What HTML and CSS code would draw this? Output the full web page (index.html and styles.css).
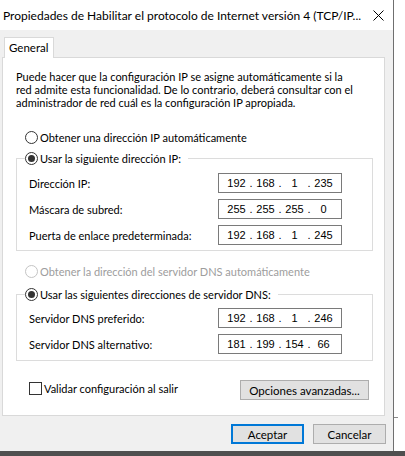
FILE: index.html
```html
<!DOCTYPE html>
<html lang="es">
<head>
<meta charset="utf-8">
<title>Propiedades TCP/IPv4</title>
<link rel="stylesheet" href="styles.css">
</head>
<body>
<div class="screen">
  <div class="top">
    <div class="window">
      <div class="titlebar">
        <span class="title">Propiedades de Habilitar el protocolo de Internet versión 4 (TCP/IP...</span>
        <svg class="close" width="11" height="11" viewBox="0 0 11 11"><path d="M0.5 0.5L10.5 10.5M10.5 0.5L0.5 10.5" stroke="#000" stroke-width="1" fill="none"/></svg>
      </div>
      <div class="client">
        <div class="tabs"><div class="tab">General</div></div>
        <div class="panel">
          <p class="desc">Puede hacer que la configuración IP se asigne automáticamente si la<br>red admite esta funcionalidad. De lo contrario, deberá consultar con el<br>administrador de red cuál es la configuración IP apropiada.</p>
          <div class="radio-row first"><span class="radio"></span><span>Obtener una dirección IP automáticamente</span></div>
          <div class="group g1">
            <div class="legend"><span class="radio checked"></span><span>Usar la siguiente dirección IP:</span></div>
            <div class="field"><span class="label">Dirección IP:</span><div class="ip"><span class="oct">192</span><span class="dot">.</span><span class="oct">168</span><span class="dot">.</span><span class="oct">1</span><span class="dot">.</span><span class="oct">235</span></div></div>
            <div class="field"><span class="label">Máscara de subred:</span><div class="ip"><span class="oct">255</span><span class="dot">.</span><span class="oct">255</span><span class="dot">.</span><span class="oct">255</span><span class="dot">.</span><span class="oct">0</span></div></div>
            <div class="field"><span class="label">Puerta de enlace predeterminada:</span><div class="ip"><span class="oct">192</span><span class="dot">.</span><span class="oct">168</span><span class="dot">.</span><span class="oct">1</span><span class="dot">.</span><span class="oct">245</span></div></div>
          </div>
          <div class="radio-row disabled"><span class="radio"></span><span>Obtener la dirección del servidor DNS automáticamente</span></div>
          <div class="group g2">
            <div class="legend"><span class="radio checked"></span><span>Usar las siguientes direcciones de servidor DNS:</span></div>
            <div class="field"><span class="label">Servidor DNS preferido:</span><div class="ip"><span class="oct">192</span><span class="dot">.</span><span class="oct">168</span><span class="dot">.</span><span class="oct">1</span><span class="dot">.</span><span class="oct">246</span></div></div>
            <div class="field"><span class="label">Servidor DNS alternativo:</span><div class="ip"><span class="oct">181</span><span class="dot">.</span><span class="oct">199</span><span class="dot">.</span><span class="oct">154</span><span class="dot">.</span><span class="oct">66</span></div></div>
          </div>
          <div class="bottom-row">
            <div class="check"><span class="checkbox"></span><span>Validar configuración al salir</span></div>
            <button class="btn adv" type="button">Opciones avanzadas...</button>
          </div>
        </div>
        <div class="actions">
          <button class="btn primary" type="button">Aceptar</button>
          <button class="btn" type="button">Cancelar</button>
        </div>
      </div>
    </div>
    <div class="side"><div class="side-line"></div></div>
  </div>
  <div class="desk"></div>
</div>
</body>
</html>
```
FILE: styles.css
```css
html, body {
  margin: 0;
  padding: 0;
}
body {
  width: 405px;
  height: 456px;
  overflow: hidden;
  background: #fff;
  font-family: Lato, "Liberation Sans", Arial, sans-serif;
  font-size: 11px;
  color: #000;
}
.screen {
  display: flex;
  flex-direction: column;
  height: 456px;
}
.top {
  display: flex;
  height: 451px;
}
.window {
  width: 394px;
  box-sizing: border-box;
  border-right: 1px solid #6f6f6f;
  display: flex;
  flex-direction: column;
}
.titlebar {
  height: 30px;
  background: #fff;
  display: flex;
  align-items: center;
  padding-left: 3px;
  font-size: 12px;
}
.title {
  flex: 1;
  white-space: nowrap;
  overflow: hidden;
}
.close {
  margin-right: 9px;
  margin-left: 8px;
  flex: none;
}
.client {
  flex: 1;
  background: #f0f0f0;
  display: flex;
  flex-direction: column;
}
.tabs {
  display: flex;
  padding: 7px 0 0 4px;
}
.tab {
  position: relative;
  z-index: 1;
  width: 50px;
  height: 21px;
  box-sizing: border-box;
  border: 1px solid #d9d9d9;
  border-bottom: none;
  background: #fff;
  margin-bottom: -1px;
  padding-left: 4px;
  line-height: 19px;
  font-size: 11.5px;
}
.panel {
  margin-left: 2px;
  width: 383px;
  height: 359px;
  box-sizing: border-box;
  border: 1px solid #d9d9d9;
  background: #fff;
  padding: 0 11px 0 13px;
  display: flex;
  flex-direction: column;
}
.desc {
  margin: 12px 0 0;
  line-height: 13px;
  white-space: nowrap;
}
.radio-row {
  display: flex;
  align-items: center;
  gap: 2px;
  height: 15px;
  padding-left: 9px;
  margin-top: 13px;
  white-space: nowrap;
}
.radio-row.first {
  margin-top: 21px;
}
.radio-row.disabled {
  color: #9d9d9d;
}
.radio-row.disabled .radio {
  border-color: #c4c4c4;
}
.radio {
  width: 13px;
  height: 13px;
  box-sizing: border-box;
  border: 1px solid #333;
  border-radius: 50%;
  background: #fff;
  flex: none;
}
.radio.checked::after {
  content: "";
  display: block;
  width: 7px;
  height: 7px;
  margin: 2px;
  border-radius: 50%;
  background: #333;
}
.group {
  border: 1px solid #dcdcdc;
  padding: 0 0 5px 12px;
  display: flex;
  flex-direction: column;
}
.g1 {
  margin-top: 13px;
}
.g2 {
  margin-top: 15px;
  padding-bottom: 6px;
}
.legend {
  display: flex;
  align-items: center;
  gap: 2px;
  height: 15px;
  margin: -8px 0 0 -4px;
  padding-right: 7px;
  background: #fff;
  align-self: flex-start;
  white-space: nowrap;
}
.field {
  display: flex;
  align-items: center;
  height: 20px;
  margin-top: 6px;
}
.g1 .field:nth-child(2) {
  margin-top: 7px;
}
.label {
  width: 189px;
  flex: none;
  white-space: nowrap;
}
.ip {
  width: 124px;
  height: 20px;
  box-sizing: border-box;
  border: 1px solid #7a7a7a;
  display: flex;
  align-items: center;
  padding-left: 6px;
  font-family: "Liberation Sans", Arial, sans-serif;
  font-size: 11px;
}
.oct {
  width: 23px;
  text-align: center;
}
.dot {
  width: 6px;
  text-align: center;
}
.bottom-row {
  display: flex;
  align-items: flex-start;
  margin-top: 19px;
  padding-left: 13px;
}
.check {
  display: flex;
  align-items: center;
  gap: 2px;
  height: 15px;
  margin-top: 1px;
  white-space: nowrap;
}
.checkbox {
  width: 13px;
  height: 13px;
  box-sizing: border-box;
  border: 1px solid #333;
  background: #fff;
  flex: none;
}
.btn {
  font-family: inherit;
  font-size: 11.5px;
  color: #000;
  background: #e1e1e1;
  border: 1px solid #adadad;
  height: 20px;
  width: 73px;
  box-sizing: border-box;
  padding: 0;
  margin: 0;
  line-height: 17px;
  text-align: center;
}
.adv {
  width: 129px;
  margin-left: auto;
  margin-right: 4px;
}
.primary {
  border: 2px solid #0078d7;
  line-height: 15px;
}
.actions {
  display: flex;
  justify-content: flex-end;
  gap: 9px;
  margin-top: 8px;
  padding-right: 7px;
}
.side {
  flex: 1;
  background: #fff;
}
.side-line {
  margin-top: 417px;
  width: 4px;
  height: 1px;
  background: #8a8a8a;
}
.desk {
  height: 5px;
  background: #4f4f4f;
}
```
